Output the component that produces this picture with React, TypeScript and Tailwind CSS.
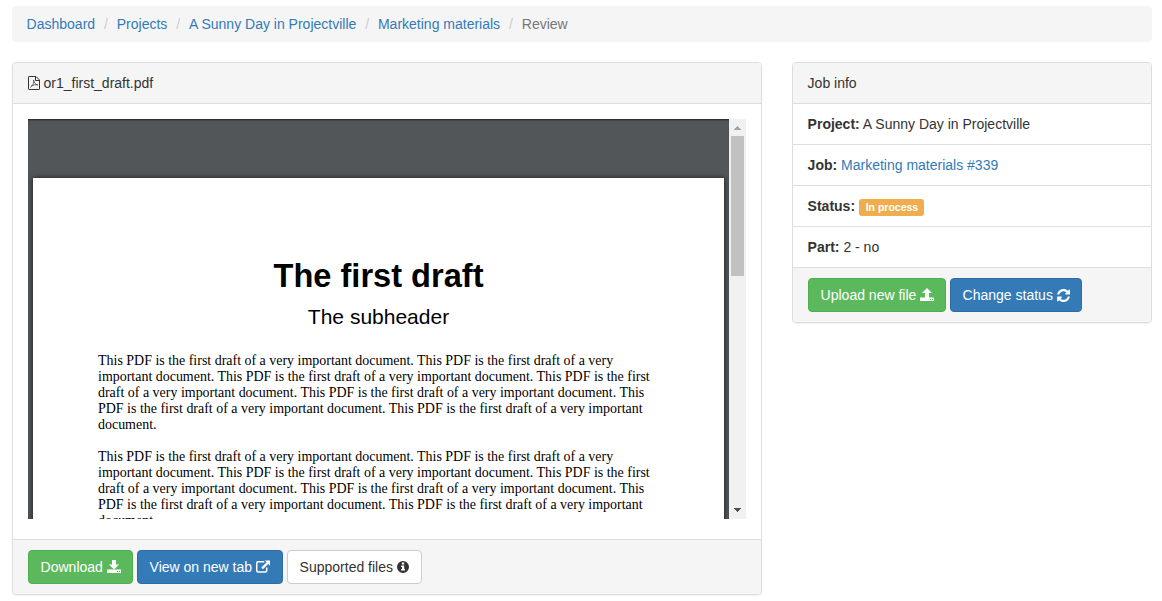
import type { ReactNode } from "react";

const sentence = "This PDF is the first draft of a very important document.";
const paragraph = Array(7).fill(sentence).join(" ");

function Icon({ d, className, box = "0 0 14 14" }: { d: string; className: string; box?: string }) {
  return (
    <svg viewBox={box} className={className} fill="currentColor" fillRule="evenodd" aria-hidden="true">
      <path d={d} />
    </svg>
  );
}

const saveIcon = "M5 0h4v4.5h3L7 9.5 2 4.5h3zM0 9.5h14V13H0zM10 11v1h1v-1zM12 11v1h1v-1z";
const openIcon = "M7 0 12 5H9v4.5H5V5H2zM0 9.5h14V13H0zM10 11v1h1v-1zM12 11v1h1v-1z";
const linkIcon =
  "M11.5 7.5v3a2.25 2.25 0 0 1-2.25 2.25h-7A2.25 2.25 0 0 1 0 10.5v-7.25A2.25 2.25 0 0 1 2.25 1h6v1.5h-6a.75.75 0 0 0-.75.75v7.25c0 .41.34.75.75.75h7a.75.75 0 0 0 .75-.75v-3zM14 .5v5.2L12.2 3.9 6.9 9.2 5.3 7.6l5.3-5.3L8.8.5z";
const infoIcon =
  "M12 7A6 6 0 1 1 0 7a6 6 0 0 1 12 0zM8 10.5v-1.5H7.2V5.5H4V7h1v2H4v1.5zM7.2 4.5V2.5H4.9v2z";
const refreshIcon =
  "M11.81 8.25c0 .02 0 .05-.01.07C11.14 11.07 8.88 13 6 13c-1.52 0-2.98-.6-4.09-1.65l-1 1.01A.5.5 0 0 1 .06 12V8.5a.5.5 0 0 1 .5-.5h3.5a.5.5 0 0 1 .35.85L3.34 9.92A3.98 3.98 0 0 0 9.47 9.1c.18-.3.28-.6.41-.9.04-.11.11-.2.23-.2h1.5c.11 0 .2.11.2.25zM12 2v3.5a.5.5 0 0 1-.5.5H8a.5.5 0 0 1-.35-.85l1.08-1.08A3.98 3.98 0 0 0 2.6 4.9c-.18.3-.28.6-.41.9-.04.11-.11.2-.23.2H.4a.25.25 0 0 1-.25-.25v-.06C.82 2.93 3.1 1 6 1c1.54 0 3 .61 4.12 1.65l1.02-1.01A.5.5 0 0 1 12 2z";

function PdfIcon() {
  return (
    <svg viewBox="0 0 12 14" className="mr-1 -ml-[0.5px] h-[14px] w-3" fill="none" stroke="currentColor" aria-hidden="true">
      <path d="M.5 1.1q0-.6.6-.6H8L11.5 4v8.9q0 .6-.6.6H1.1q-.6 0-.6-.6zM7.5.7v3.8h3.8" />
      <path d="M5.4 4c.8 2.6 1.4 4 4.5 5.1M5.7 3.8C6.5 7 4.4 9.8 2.2 11.5M3 10.2c1.8-1 4.5-1.8 6.9-1.4" strokeWidth=".7" />
    </svg>
  );
}

function Button({ tone, children }: { tone: string; children: ReactNode }) {
  return <button className={`flex h-[34px] items-center rounded-[4px] border pl-[11.6px] whitespace-nowrap ${tone}`}>{children}</button>;
}
const green = "border-[#4cae4c] bg-[#5cb85c] text-white";
const blue = "border-[#2e6da4] bg-[#337ab7] text-white";

const crumbs = ["Dashboard", "Projects", "A Sunny Day in Projectville", "Marketing materials"];
const panel = "overflow-hidden rounded-[4px] border border-[#ddd] bg-white shadow-[0_1px_1px_rgba(0,0,0,0.05)]";
const row = "h-[41px] border-b border-[#ddd] px-[14.6px] pt-[10px]";

export default function App() {
  return (
    <div className="h-[601px] overflow-hidden bg-white pt-[6px] pr-[10px] pl-3 font-['Liberation_Sans',Arial,sans-serif] text-[14px] leading-5 text-[#333]">
      <nav className="flex h-9 items-center rounded-[4px] bg-[#f5f5f5] px-[14.6px]">
        {crumbs.map((label) => (
          <span key={label} className="flex">
            <a href="#" className="text-[#337ab7]">{label}</a>
            <span className="w-[21.66px] text-center text-[#ccc]">/</span>
          </span>
        ))}
        <span className="text-[#777]">Review</span>
      </nav>

      <main className="mt-5 flex items-start gap-[30px]">
        <section className={`w-[750px] ${panel}`}>
          <header className="flex h-[41px] items-center border-b border-[#ddd] bg-[#f5f5f5] px-[15px]">
            <PdfIcon />
            or1_first_draft.pdf
          </header>
          <div className="h-[435px] p-[15px]">
            <div className="flex h-[400px] w-[718px]">
              <div className="w-[701px] overflow-hidden bg-[#525659] px-[5px] pt-[59px] shadow-[inset_0_2px_2px_-1px_rgba(0,0,0,0.6)]">
                <article className="h-[500px] bg-white px-[65px] pt-[78px] text-black shadow-[0_0_5px_rgba(0,0,0,0.7)]">
                  <h1 className="text-center text-[32.6px] leading-10 font-bold">The first draft</h1>
                  <h2 className="mt-[6px] text-center text-[21px] leading-[30px]">The subheader</h2>
                  <div className="mt-[21px] -mr-2 w-[558px] space-y-4 font-['Liberation_Serif',serif] text-[13.96px] leading-4">
                    <p>{paragraph}</p>
                    <p>{paragraph}</p>
                  </div>
                </article>
              </div>
              <div className="flex w-[17px] flex-col items-center bg-[#f1f1f1]">
                <Icon d="M5 7h7v-1h-1V5h-1V4H9V3H8v1H7v1H6v1H5z" box="0 -4 17 17" className="h-[17px] w-[17px] text-[#a3a3a3]" />
                <div className="h-[140px] w-[13px] bg-[#c1c1c1]" />
                <Icon d="M5 6h7v1h-1v1h-1v1H9v1H8v-1H7V8H6V7H5z" box="0 0 17 17" className="mt-auto h-[17px] w-[17px] text-[#505050]" />
              </div>
            </div>
          </div>
          <footer className="flex h-[55px] gap-1 border-t border-[#ddd] bg-[#f5f5f5] px-[15px] pt-[10px]">
            <Button tone={`w-[105px] ${green}`}>Download<Icon d={saveIcon} className="ml-1 h-[14px] w-[14px]" /></Button>
            <Button tone={`w-[146px] ${blue}`}>View on new tab<Icon d={linkIcon} className="ml-1 h-[14px] w-[14px]" /></Button>
            <Button tone="w-[135px] border-[#ccc] bg-white text-[#333]">Supported files<Icon d={infoIcon} box="0 1 12 12" className="ml-1 h-3 w-3" /></Button>
          </footer>
        </section>

        <aside className={`w-[360px] ${panel}`}>
          <header className={`${row} bg-[#f5f5f5]`}>Job info</header>
          <div className={row}><b>Project:</b> A Sunny Day in Projectville</div>
          <div className={row}><b>Job:</b> <a href="#" className="text-[#337ab7]">Marketing materials #339</a></div>
          <div className={`${row} flex`}>
            <b>Status:</b>
            <span className="mt-[3px] ml-[4.4px] flex h-[17px] w-[65px] items-center justify-center rounded-[3px] bg-[#f0ad4e] pb-px text-[10.5px] font-bold text-white">In process</span>
          </div>
          <div className={row}><b>Part:</b> 2 - no</div>
          <footer className="flex h-[54px] gap-1 bg-[#f5f5f5] px-[15px] pt-[10px]">
            <Button tone={`w-[138px] ${green}`}>Upload new file<Icon d={openIcon} className="ml-[3.5px] h-[14px] w-[14px]" /></Button>
            <Button tone={`w-[132px] ${blue}`}>Change status<Icon d={refreshIcon} box="0 1 12 12" className="ml-1 h-[13px] w-[13px]" /></Button>
          </footer>
        </aside>
      </main>
    </div>
  );
}
